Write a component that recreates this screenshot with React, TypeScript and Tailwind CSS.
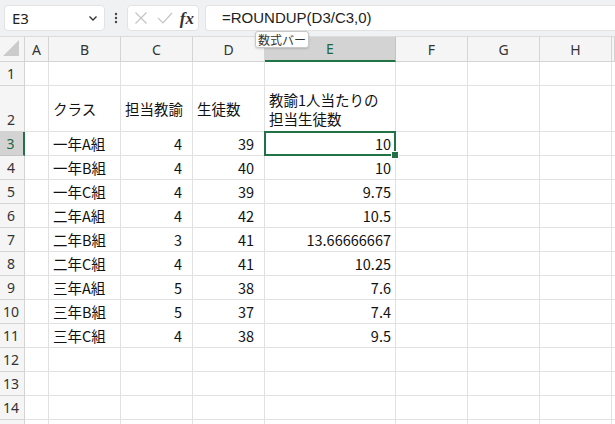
import React from "react";

const cols = ["A", "B", "C", "D", "E", "F", "G", "H", ""];
const widths = ["w-[24px]", "w-[72px]", "w-[72px]", "w-[72px]", "w-[131px]", "w-[72px]", "w-[72px]", "w-[72px]", "w-[3px]"];

type Row = { n: number; h: string; cells: (string | null)[] };

const data: Row[] = [
  { n: 1, h: "h-[24px]", cells: [null, null, null, null, null] },
  { n: 2, h: "h-[46px]", cells: [null, "クラス", "担当教諭", "生徒数", "教諭1人当たりの\n担当生徒数"] },
  { n: 3, h: "h-[24px]", cells: [null, "一年A組", "4", "39", "10"] },
  { n: 4, h: "h-[24px]", cells: [null, "一年B組", "4", "40", "10"] },
  { n: 5, h: "h-[24px]", cells: [null, "一年C組", "4", "39", "9.75"] },
  { n: 6, h: "h-[24px]", cells: [null, "二年A組", "4", "42", "10.5"] },
  { n: 7, h: "h-[24px]", cells: [null, "二年B組", "3", "41", "13.66666667"] },
  { n: 8, h: "h-[24px]", cells: [null, "二年C組", "4", "41", "10.25"] },
  { n: 9, h: "h-[24px]", cells: [null, "三年A組", "5", "38", "7.6"] },
  { n: 10, h: "h-[24px]", cells: [null, "三年B組", "5", "37", "7.4"] },
  { n: 11, h: "h-[24px]", cells: [null, "三年C組", "4", "38", "9.5"] },
  { n: 12, h: "h-[24px]", cells: [null, null, null, null, null] },
  { n: 13, h: "h-[24px]", cells: [null, null, null, null, null] },
  { n: 14, h: "h-[24px]", cells: [null, null, null, null, null] },
  { n: 15, h: "h-[24px]", cells: [null, null, null, null, null] },
];

const cellFont = { fontFamily: '"Noto Sans CJK JP", sans-serif' };
const uiFont = { fontFamily: '"Noto Sans", "Noto Sans CJK JP", sans-serif' };

function Cell({ col, value, row }: { col: number; value: string | null; row: number }) {
  const isNum = value !== null && /^[0-9.]+$/.test(value);
  const selected = row === 3 && col === 4;
  const pad = isNum ? (col === 4 ? "pr-[4px]" : "pr-[10px]") : "pl-[4px]";
  return (
    <div
      className={`relative shrink-0 ${widths[col]} border-r border-b border-[#e1e1e1] flex items-center ${isNum ? "justify-end" : "justify-start"} ${pad} text-[14.5px] text-[#111] whitespace-pre leading-[19px]`}
      style={cellFont}
    >
      {value}
      {selected && (
        <>
          <div className="absolute left-[-1px] top-[-1px] right-[-1px] bottom-[-1px] border-2 border-[#217346] pointer-events-none" />
          <div className="absolute right-[-4px] bottom-[-4px] w-[6px] h-[6px] bg-[#217346] border border-white box-content z-10" />
        </>
      )}
    </div>
  );
}

export default function App() {
  return (
    <div className="w-[615px] h-[424px] overflow-hidden bg-white relative" style={uiFont}>
      {/* Formula bar */}
      <div className="h-[36px] bg-[#f0f1f3] flex items-center pl-[4px] gap-0">
        <div className="w-[101px] h-[26px] bg-white rounded-[4px] border border-[#e3e3e3] flex items-center justify-between pl-[7px] pr-[5px]">
          <span className="text-[15px] text-[#222]">E3</span>
          <svg width="10" height="10" viewBox="0 0 10 10" className="mr-[1px]">
            <path d="M1.5 3.5 L5 7 L8.5 3.5" fill="none" stroke="#333" strokeWidth="1.4" />
          </svg>
        </div>
        <div className="w-[22px] flex justify-center">
          <svg width="4" height="14" viewBox="0 0 4 14">
            <circle cx="2" cy="3" r="1.2" fill="#444" />
            <circle cx="2" cy="7" r="1.2" fill="#444" />
            <circle cx="2" cy="11" r="1.2" fill="#444" />
          </svg>
        </div>
        <div className="w-[72px] h-[26px] bg-white rounded-[4px] border border-[#e3e3e3] flex items-center pl-[6px] pr-[4px]">
          <svg width="14" height="14" viewBox="0 0 14 14">
            <path d="M1.5 1.5 L12.5 12.5 M12.5 1.5 L1.5 12.5" stroke="#c4c4c4" strokeWidth="1.2" fill="none" />
          </svg>
          <svg width="16" height="14" viewBox="0 0 16 14" className="ml-[9px]">
            <path d="M1 7 L6 12 L15 2" stroke="#c4c4c4" strokeWidth="1.2" fill="none" />
          </svg>
          <span className="ml-auto text-[17px] italic font-bold text-[#333] leading-none" style={{ fontFamily: '"Liberation Serif", serif' }}>
            fx
          </span>
        </div>
        <div className="ml-[6px] flex-1 h-[26px] bg-white rounded-l-[4px] border border-r-0 border-[#e3e3e3] flex items-center pl-[16px]">
          <span className="text-[15px] text-[#222]" style={{ fontFamily: '"Liberation Sans", sans-serif' }}>=ROUNDUP(D3/C3,0)</span>
        </div>
      </div>

      {/* Column headers */}
      <div className="flex h-[26px]">
        <div className="relative w-[25px] shrink-0 bg-[#f5f5f5] border-r border-b border-[#d4d4d4] border-t border-t-[#dcdcdc]">
          <svg width="20" height="20" viewBox="0 0 20 20" className="absolute right-[3px] bottom-[3px]">
            <path d="M18 2 L18 18 L2 18 Z" fill="#cbcbcb" />
          </svg>
        </div>
        {cols.map((c, i) => (
          <div
            key={i}
            className={`shrink-0 ${widths[i]} flex items-center justify-center text-[14px] border-t border-t-[#dcdcdc] ${
              c === "E"
                ? "bg-[#d3d3d3] text-[#1d6a3f] border-b-2 border-b-[#217346] border-r border-r-[#c4c4c4]"
                : "bg-[#f5f5f5] text-[#333] border-r border-b border-[#d4d4d4]"
            }`}
          >
            {c}
          </div>
        ))}
      </div>

      {/* Grid */}
      {data.map((r) => (
        <div key={r.n} className={`flex ${r.h}`}>
          <div
            className={`w-[25px] shrink-0 flex items-end justify-center pb-[1px] pr-[2px] text-[14px] leading-[20px] ${
              r.n === 3
                ? "bg-[#d3d3d3] text-[#1d6a3f] border-r-2 border-r-[#217346] border-b border-b-[#c4c4c4]"
                : "bg-[#f5f5f5] text-[#333] border-r border-b border-[#d4d4d4]"
            }`}
          >
            {r.n < 15 ? r.n : ""}
          </div>
          {[0, 1, 2, 3, 4, 5, 6, 7, 8].map((ci) => (
            <Cell key={ci} col={ci} row={r.n} value={ci < 5 ? r.cells[ci] : null} />
          ))}
        </div>
      ))}

      {/* Tooltip */}
      <div
        className="absolute left-[255px] top-[31px] h-[17px] px-[2px] bg-white border border-[#c8c8c8] rounded-[3px] flex items-center text-[12px] text-[#333] leading-none shadow-[0_1px_2px_rgba(0,0,0,0.15)]"
        style={cellFont}
      >
        数式バー
      </div>
    </div>
  );
}
